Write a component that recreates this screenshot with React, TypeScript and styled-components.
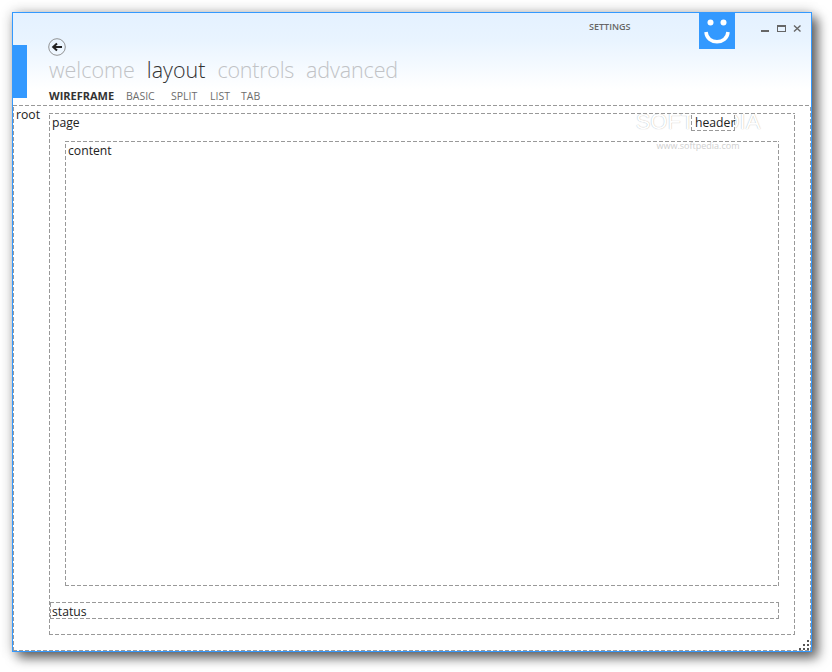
import React from "react";
import styled, { createGlobalStyle } from "styled-components";

const Global = createGlobalStyle`
  html, body { margin: 0; padding: 0; background: #fff; }
  body { width: 832px; height: 672px; overflow: hidden; font-family: "Open Sans", "Liberation Sans", sans-serif; }
`;

const Stage = styled.div`
  padding: 12px 0 0 12px;
`;

const Window = styled.div`
  position: relative;
  width: 800px;
  height: 640px;
  box-sizing: border-box;
  border: 1px solid #3399ff;
  background: #fff;
  display: flex;
  flex-direction: column;
  box-shadow: 6px 6px 11px rgba(0, 0, 0, 0.58), 0 0 12px rgba(0, 0, 0, 0.22);
`;

const Header = styled.header`
  position: relative;
  height: 92px;
  flex: none;
  box-sizing: border-box;
  padding: 25px 0 0 35px;
  background: linear-gradient(#e4f1ff 0, #e9f4ff 28px, #ffffff 76px);
`;

const AccentBar = styled.div`
  position: absolute;
  left: 0;
  top: 32px;
  width: 14px;
  height: 53px;
  background: #3399ff;
`;

const Title = styled.div`
  position: absolute;
  top: 8px;
  left: 576px;
  font-size: 9px;
  line-height: 12px;
  font-weight: 600;
  color: #666;
`;

const Logo = styled.svg`
  position: absolute;
  top: 0;
  left: 686px;
  width: 36px;
  height: 36px;
`;

const Caption = styled.div`
  position: absolute;
  top: 8px;
  left: 748px;
  display: flex;
  gap: 7px;
`;

const CaptionIcon = styled.svg`
  display: block;
  width: 9px;
  height: 12px;
`;

const BackIcon = styled.svg`
  display: block;
  width: 18px;
  height: 18px;
`;

const Nav = styled.nav`
  display: flex;
  gap: 12px;
  margin: -1px 0 0 1px;
  height: 30px;
  align-items: center;
`;

const NavItem = styled.span<{ $active?: boolean; $tight?: number }>`
  font-size: 21.5px;
  font-weight: 300;
  line-height: 30px;
  letter-spacing: ${(p) => p.$tight ?? 0}px;
  color: ${(p) => (p.$active ? "#333" : "#c1c3c6")};
`;

const SubNav = styled.div`
  display: flex;
  margin: 3px 0 0 1px;
`;

const SubItem = styled.span<{ $active?: boolean; $w: number }>`
  width: ${(p) => p.$w}px;
  font-size: ${(p) => (p.$active ? 11 : 10.5)}px;
  line-height: 16px;
  white-space: nowrap;
  font-weight: ${(p) => (p.$active ? 700 : 400)};
  color: ${(p) => (p.$active ? "#333" : "#6d6d6d")};
`;

const Dashed = styled.div`
  box-sizing: border-box;
  border: 1px solid transparent;
  background-origin: border-box;
  background-clip: border-box;
  background-repeat: no-repeat;
  background-image:
    repeating-linear-gradient(90deg, #999 0 4px, transparent 4px 6px),
    repeating-linear-gradient(90deg, #999 0 4px, transparent 4px 6px),
    repeating-linear-gradient(0deg, #999 0 4px, transparent 4px 6px),
    repeating-linear-gradient(0deg, #999 0 4px, transparent 4px 6px);
  background-size: 100% 1px, 100% 1px, 1px 100%, 1px 100%;
  background-position: left top, left bottom, left top, right top;
`;

const Label = styled.span`
  display: block;
  font-size: 12.2px;
  line-height: 16px;
  color: #222;
`;

const Root = styled(Dashed)`
  flex: 1;
  display: flex;
  align-items: stretch;
  padding: 1px 15px 15px 2px;
`;

const RootLabel = styled(Label)`
  width: 33px;
  flex: none;
`;

const Page = styled(Dashed)`
  position: relative;
  flex: 1;
  margin-top: 6px;
  display: flex;
  flex-direction: column;
  padding: 1px 15px 15px 0;
`;

const PageTop = styled.div`
  display: flex;
  justify-content: space-between;
  padding-left: 2px;
  height: 26px;
  flex: none;
`;

const HeaderBox = styled(Dashed)`
  position: relative;
  z-index: 1;
  width: 44px;
  height: 18px;
  margin: -2px 44px 0 0;
  padding: 1px 0 0 3px;
  background-color: #fff;
`;

const Content = styled(Dashed)`
  flex: 1;
  margin-left: 15px;
  padding: 1px 0 0 2px;
`;

const Status = styled(Dashed)`
  flex: none;
  height: 17px;
  margin-top: 16px;
  padding: 1px 0 0 1px;
`;

const Watermark = styled.div`
  position: absolute;
  left: 622px;
  top: 97px;
  width: 126px;
  text-align: center;
  color: #fff;
  pointer-events: none;
`;

const WmBig = styled.div`
  font-family: "Liberation Sans", sans-serif;
  font-size: 22px;
  line-height: 24px;
  white-space: nowrap;
  text-shadow: 0 0 1px #aaa;
`;

const WmSmall = styled.div`
  font-size: 9px;
  line-height: 14px;
  margin-top: 5px;
  color: #cfcfcf;
`;

const Grip = styled.svg`
  position: absolute;
  right: 0;
  bottom: 0;
  width: 12px;
  height: 12px;
`;

export default function App() {
  return (
    <Stage>
      <Global />
      <Window>
        <Header>
          <AccentBar />
          <Title>SETTINGS</Title>
          <Logo viewBox="0 0 36 36">
            <rect width="36" height="36" fill="#3399ff" />
            <circle cx="11.5" cy="9.5" r="3" fill="#fff" />
            <circle cx="24.5" cy="9.5" r="3" fill="#fff" />
            <path d="M7 19 C 8 32, 28 32, 29 19" fill="none" stroke="#fff" strokeWidth="3.5" />
          </Logo>
          <Caption>
            <CaptionIcon viewBox="0 0 9 12">
              <rect x="0" y="9" width="8" height="2" fill="#666" />
            </CaptionIcon>
            <CaptionIcon viewBox="0 0 9 12">
              <rect x="0.5" y="4.5" width="8" height="6" fill="none" stroke="#666" />
              <rect x="0" y="4" width="9" height="2" fill="#666" />
            </CaptionIcon>
            <CaptionIcon viewBox="0 0 9 12">
              <path d="M1 4.5 L7.5 10.5 M7.5 4.5 L1 10.5" stroke="#666" strokeWidth="1.4" />
            </CaptionIcon>
          </Caption>
          <BackIcon viewBox="0 0 18 18">
            <circle cx="9" cy="9" r="8.3" fill="none" stroke="#888" strokeWidth="0.9" />
            <path d="M14 9 H5.5 M9 5.5 L5.2 9 L9 12.5" fill="none" stroke="#222" strokeWidth="2" />
          </BackIcon>
          <Nav>
            <NavItem>welcome</NavItem>
            <NavItem $active>layout</NavItem>
            <NavItem $tight={-0.25}>controls</NavItem>
            <NavItem $tight={-0.12}>advanced</NavItem>
          </Nav>
          <SubNav>
            <SubItem $active $w={77}>WIREFRAME</SubItem>
            <SubItem $w={45}>BASIC</SubItem>
            <SubItem $w={39}>SPLIT</SubItem>
            <SubItem $w={31}>LIST</SubItem>
            <SubItem $w={30}>TAB</SubItem>
          </SubNav>
        </Header>
        <Root>
          <RootLabel>root</RootLabel>
          <Page>
            <PageTop>
              <Label>page</Label>
              <HeaderBox>
                <Label>header</Label>
              </HeaderBox>
            </PageTop>
            <Content>
              <Label>content</Label>
            </Content>
            <Status>
              <Label>status</Label>
            </Status>
          </Page>
        </Root>
        <Watermark>
          <WmBig>SOFTPEDIA</WmBig>
          <WmSmall>www.softpedia.com</WmSmall>
        </Watermark>
        <Grip viewBox="0 0 12 12">
          <g fill="#555">
            <rect x="8" y="1" width="2" height="2" />
            <rect x="4" y="5" width="2" height="2" />
            <rect x="8" y="5" width="2" height="2" />
            <rect x="0" y="9" width="2" height="2" />
            <rect x="4" y="9" width="2" height="2" />
            <rect x="8" y="9" width="2" height="2" />
          </g>
        </Grip>
      </Window>
    </Stage>
  );
}
